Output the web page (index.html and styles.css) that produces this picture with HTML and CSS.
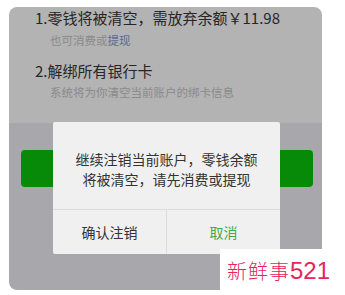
FILE: index.html
```html
<!DOCTYPE html>
<html lang="zh">
<head>
<meta charset="utf-8">
<link rel="stylesheet" href="styles.css">
</head>
<body>
<div class="panel">
  <div class="top">
    <div class="title t1">1.零钱将被清空，需放弃余额￥11.98</div>
    <div class="sub s1">也可消费或<span class="link">提现</span></div>
    <div class="title t2">2.解绑所有银行卡</div>
    <div class="sub s2">系统将为你清空当前账户的绑卡信息</div>
  </div>
  <div class="bottom">
    <div class="green-btn"></div>
  </div>
</div>
<div class="dialog">
  <div class="dialog-text">继续注销当前账户，零钱余额<br>将被清空，请先消费或提现</div>
  <div class="dialog-actions">
    <div class="action confirm">确认注销</div>
    <div class="action cancel">取消</div>
  </div>
</div>
<div class="watermark">新鲜事<span class="num">521</span></div>
</body>
</html>
```

FILE: styles.css
```css
html, body {
  margin: 0;
  padding: 0;
  background: #ffffff;
}
body {
  width: 345px;
  height: 295px;
  position: relative;
  overflow: hidden;
  font-family: "Noto Sans CJK SC", "Noto Sans", sans-serif;
}
.panel {
  margin: 7px 0 0 9px;
  width: 313px;
  height: 283px;
  border-radius: 8px;
  overflow: hidden;
  display: flex;
  flex-direction: column;
}
.top {
  height: 116px;
  background: #b3b3b3;
  padding-left: 26px;
  box-sizing: border-box;
}
.title {
  font-size: 15px;
  line-height: 21px;
  color: #262626;
}
.t1 { margin-top: 0; }
.t2 { margin-top: 12px; }
.sub {
  font-size: 11.5px;
  line-height: 16px;
  color: #8a8a8a;
  margin-left: 15px;
}
.s1 { margin-top: 4px; }
.s2 { margin-top: 3px; }
.link { color: #5b6b8c; }
.bottom {
  flex: 1;
  background: #a8a7ac;
  padding: 27px 0 0 12px;
}
.green-btn {
  width: 292px;
  height: 37px;
  background: #078a07;
  border-radius: 4px;
}
.dialog {
  position: absolute;
  left: 53px;
  top: 122px;
  width: 227px;
  height: 132px;
  background: #f0f0f0;
  border-radius: 2px;
  display: flex;
  flex-direction: column;
}
.dialog-text {
  height: 88px;
  box-sizing: border-box;
  padding-top: 27px;
  font-size: 14px;
  line-height: 20px;
  color: #333333;
  text-align: center;
  border-bottom: 1px solid #dcdcdc;
}
.dialog-actions {
  flex: 1;
  display: flex;
}
.action {
  flex: 1;
  display: flex;
  align-items: center;
  justify-content: center;
  font-size: 14px;
}
.confirm {
  color: #333333;
  border-right: 1px solid #dcdcdc;
}
.cancel { color: #45ab45; }
.watermark {
  position: absolute;
  left: 220px;
  top: 249px;
  width: 125px;
  height: 46px;
  background: #ffffff;
  box-sizing: border-box;
  padding-left: 7px;
  font-size: 20px;
  line-height: 44px;
  color: #e6245c;
  font-family: "Noto Sans CJK SC", serif;
  font-weight: 300;
  letter-spacing: 1px;
}
.num {
  font-family: "Liberation Sans", sans-serif;
  font-size: 24px;
  letter-spacing: 0;
  font-weight: 400;
}
```
